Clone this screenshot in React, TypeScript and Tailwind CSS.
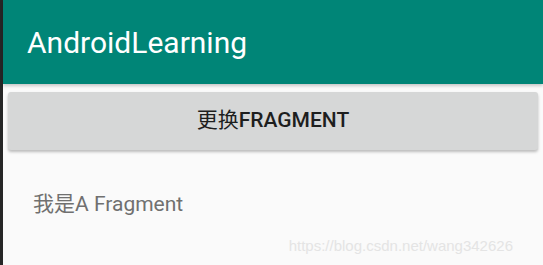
export default function App() {
  return (
    <div className="flex h-[265px] w-[543px] overflow-hidden bg-[#262626]" style={{ fontFamily: 'Roboto, "Noto Sans CJK SC", sans-serif' }}>
      <div className="w-[3px] shrink-0" />
      <div className="relative flex flex-1 flex-col bg-[#fafafa]">
        <div className="flex h-[84px] items-center bg-[#008577] pl-[24px] shadow-[0_2px_3px_rgba(0,0,0,0.2)]">
          <span className="text-[30px] text-white">AndroidLearning</span>
        </div>
        <div className="px-[5px] pt-[8px]">
          <button className="flex h-[58px] w-full items-center justify-center rounded-[3px] bg-[#d6d7d7] text-[21px] text-[#1e1e1e] shadow-[0_2px_3px_rgba(0,0,0,0.25)]">
            更换<span className="font-medium">FRAGMENT</span>
          </button>
        </div>
        <div className="pl-[30px] pt-[39px] text-[21px] text-[#707070]">我是A Fragment</div>
        <div className="absolute bottom-[8px] right-[30px] text-[15px] text-[#e4e4e4]" style={{ fontFamily: '"Liberation Sans", sans-serif' }}>
          https://blog.csdn.net/wang342626
        </div>
      </div>
    </div>
  );
}
